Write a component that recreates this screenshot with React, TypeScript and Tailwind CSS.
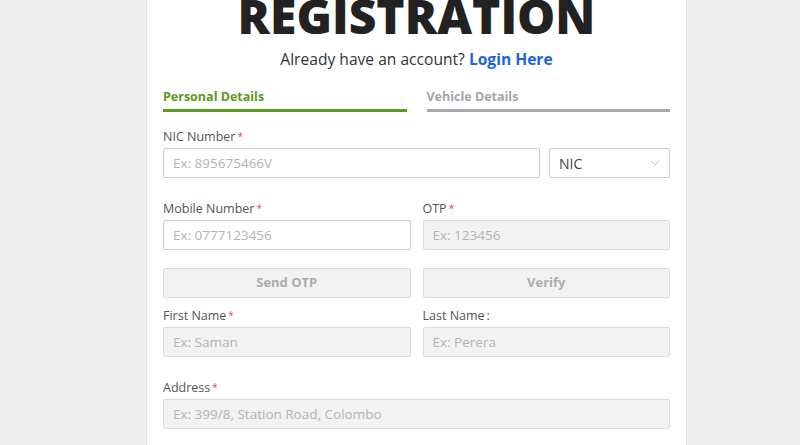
import React from "react";

const Label = ({ text, required = true, colon = false }: { text: string; required?: boolean; colon?: boolean }) => (
  <div className="h-[18px] text-[12.5px] leading-[18px] text-[#555] mb-[2px]">
    {text}
    {required && <span className="relative top-[-1px] text-[#e0455a] text-[10px] leading-none ml-[2px]">*</span>}
    {colon && <span className="ml-[2px]">:</span>}
  </div>
);

const Input = ({ placeholder, disabled = false }: { placeholder: string; disabled?: boolean }) => (
  <input
    disabled={disabled}
    placeholder={placeholder}
    className={
      "w-full h-[30px] px-[9px] text-[13.5px] border rounded-[2px] outline-none placeholder:text-[#b4b4b4] " +
      (disabled ? "bg-[#f2f2f2] border-[#dcdcdc]" : "bg-white border-[#c8c8c8]")
    }
  />
);

const App = () => {
  return (
    <main
      className="h-[445px] overflow-hidden bg-[#f0f0f0] pl-[146px]"
      style={{ fontFamily: '"Open Sans", sans-serif' }}
    >
      <section className="flow-root w-[541px] h-full bg-white border-x border-[#e2e2e2] px-[16px]">
        <h1 className="mt-[-9px] text-center text-[48px] leading-[50px] font-extrabold text-[#222]">
          REGISTRATION
        </h1>
        <p className="mt-[6px] text-center text-[15.6px] leading-[24px] text-[#333]">
          Already have an account? <span className="font-bold text-[#1f63dc]">Login Here</span>
        </p>

        <div className="mt-[17px] grid grid-cols-2 gap-x-[20px]">
          <div>
            <div className="text-[12.5px] leading-[18px] font-bold text-[#5a9a1c]">Personal Details</div>
            <div className="mt-[3px] h-[3px] bg-[#5a9a1c]" />
          </div>
          <div>
            <div className="text-[12.5px] leading-[18px] font-bold text-[#a5a5a5]">Vehicle Details</div>
            <div className="mt-[3px] h-[3px] bg-[#a8a8b0]" />
          </div>
        </div>

        <div className="mt-[16px]">
          <Label text="NIC Number" />
          <div className="flex gap-[9px]">
            <div className="flex-1">
              <Input placeholder="Ex: 895675466V" />
            </div>
            <div className="w-[121px] h-[30px] border border-[#c8c8c8] rounded-[2px] flex items-center justify-between px-[9px] text-[14px] text-[#444]">
              <span>NIC</span>
              <svg width="10" height="6" viewBox="0 0 10 6" fill="none" stroke="#c4c4c4" strokeWidth="1">
                <path d="M1 1l4 4 4-4" />
              </svg>
            </div>
          </div>
        </div>

        <div className="mt-[22px] grid grid-cols-2 gap-x-[12px]">
          <div>
            <Label text="Mobile Number" />
            <Input placeholder="Ex: 0777123456" />
          </div>
          <div>
            <Label text="OTP" />
            <Input placeholder="Ex: 123456" disabled />
          </div>
        </div>

        <div className="mt-[18px] grid grid-cols-2 gap-x-[12px]">
          <button className="h-[30px] bg-[#f2f2f2] border border-[#dcdcdc] rounded-[2px] text-[13px] font-bold text-[#acacac]">
            Send OTP
          </button>
          <button className="h-[30px] bg-[#f2f2f2] border border-[#dcdcdc] rounded-[2px] text-[13px] font-bold text-[#acacac]">
            Verify
          </button>
        </div>

        <div className="mt-[9px] grid grid-cols-2 gap-x-[12px]">
          <div>
            <Label text="First Name" />
            <Input placeholder="Ex: Saman" disabled />
          </div>
          <div>
            <Label text="Last Name" required={false} colon />
            <Input placeholder="Ex: Perera" disabled />
          </div>
        </div>

        <div className="mt-[22px]">
          <Label text="Address" />
          <Input placeholder="Ex: 399/8, Station Road, Colombo" disabled />
        </div>
      </section>
    </main>
  );
};

export default App;
